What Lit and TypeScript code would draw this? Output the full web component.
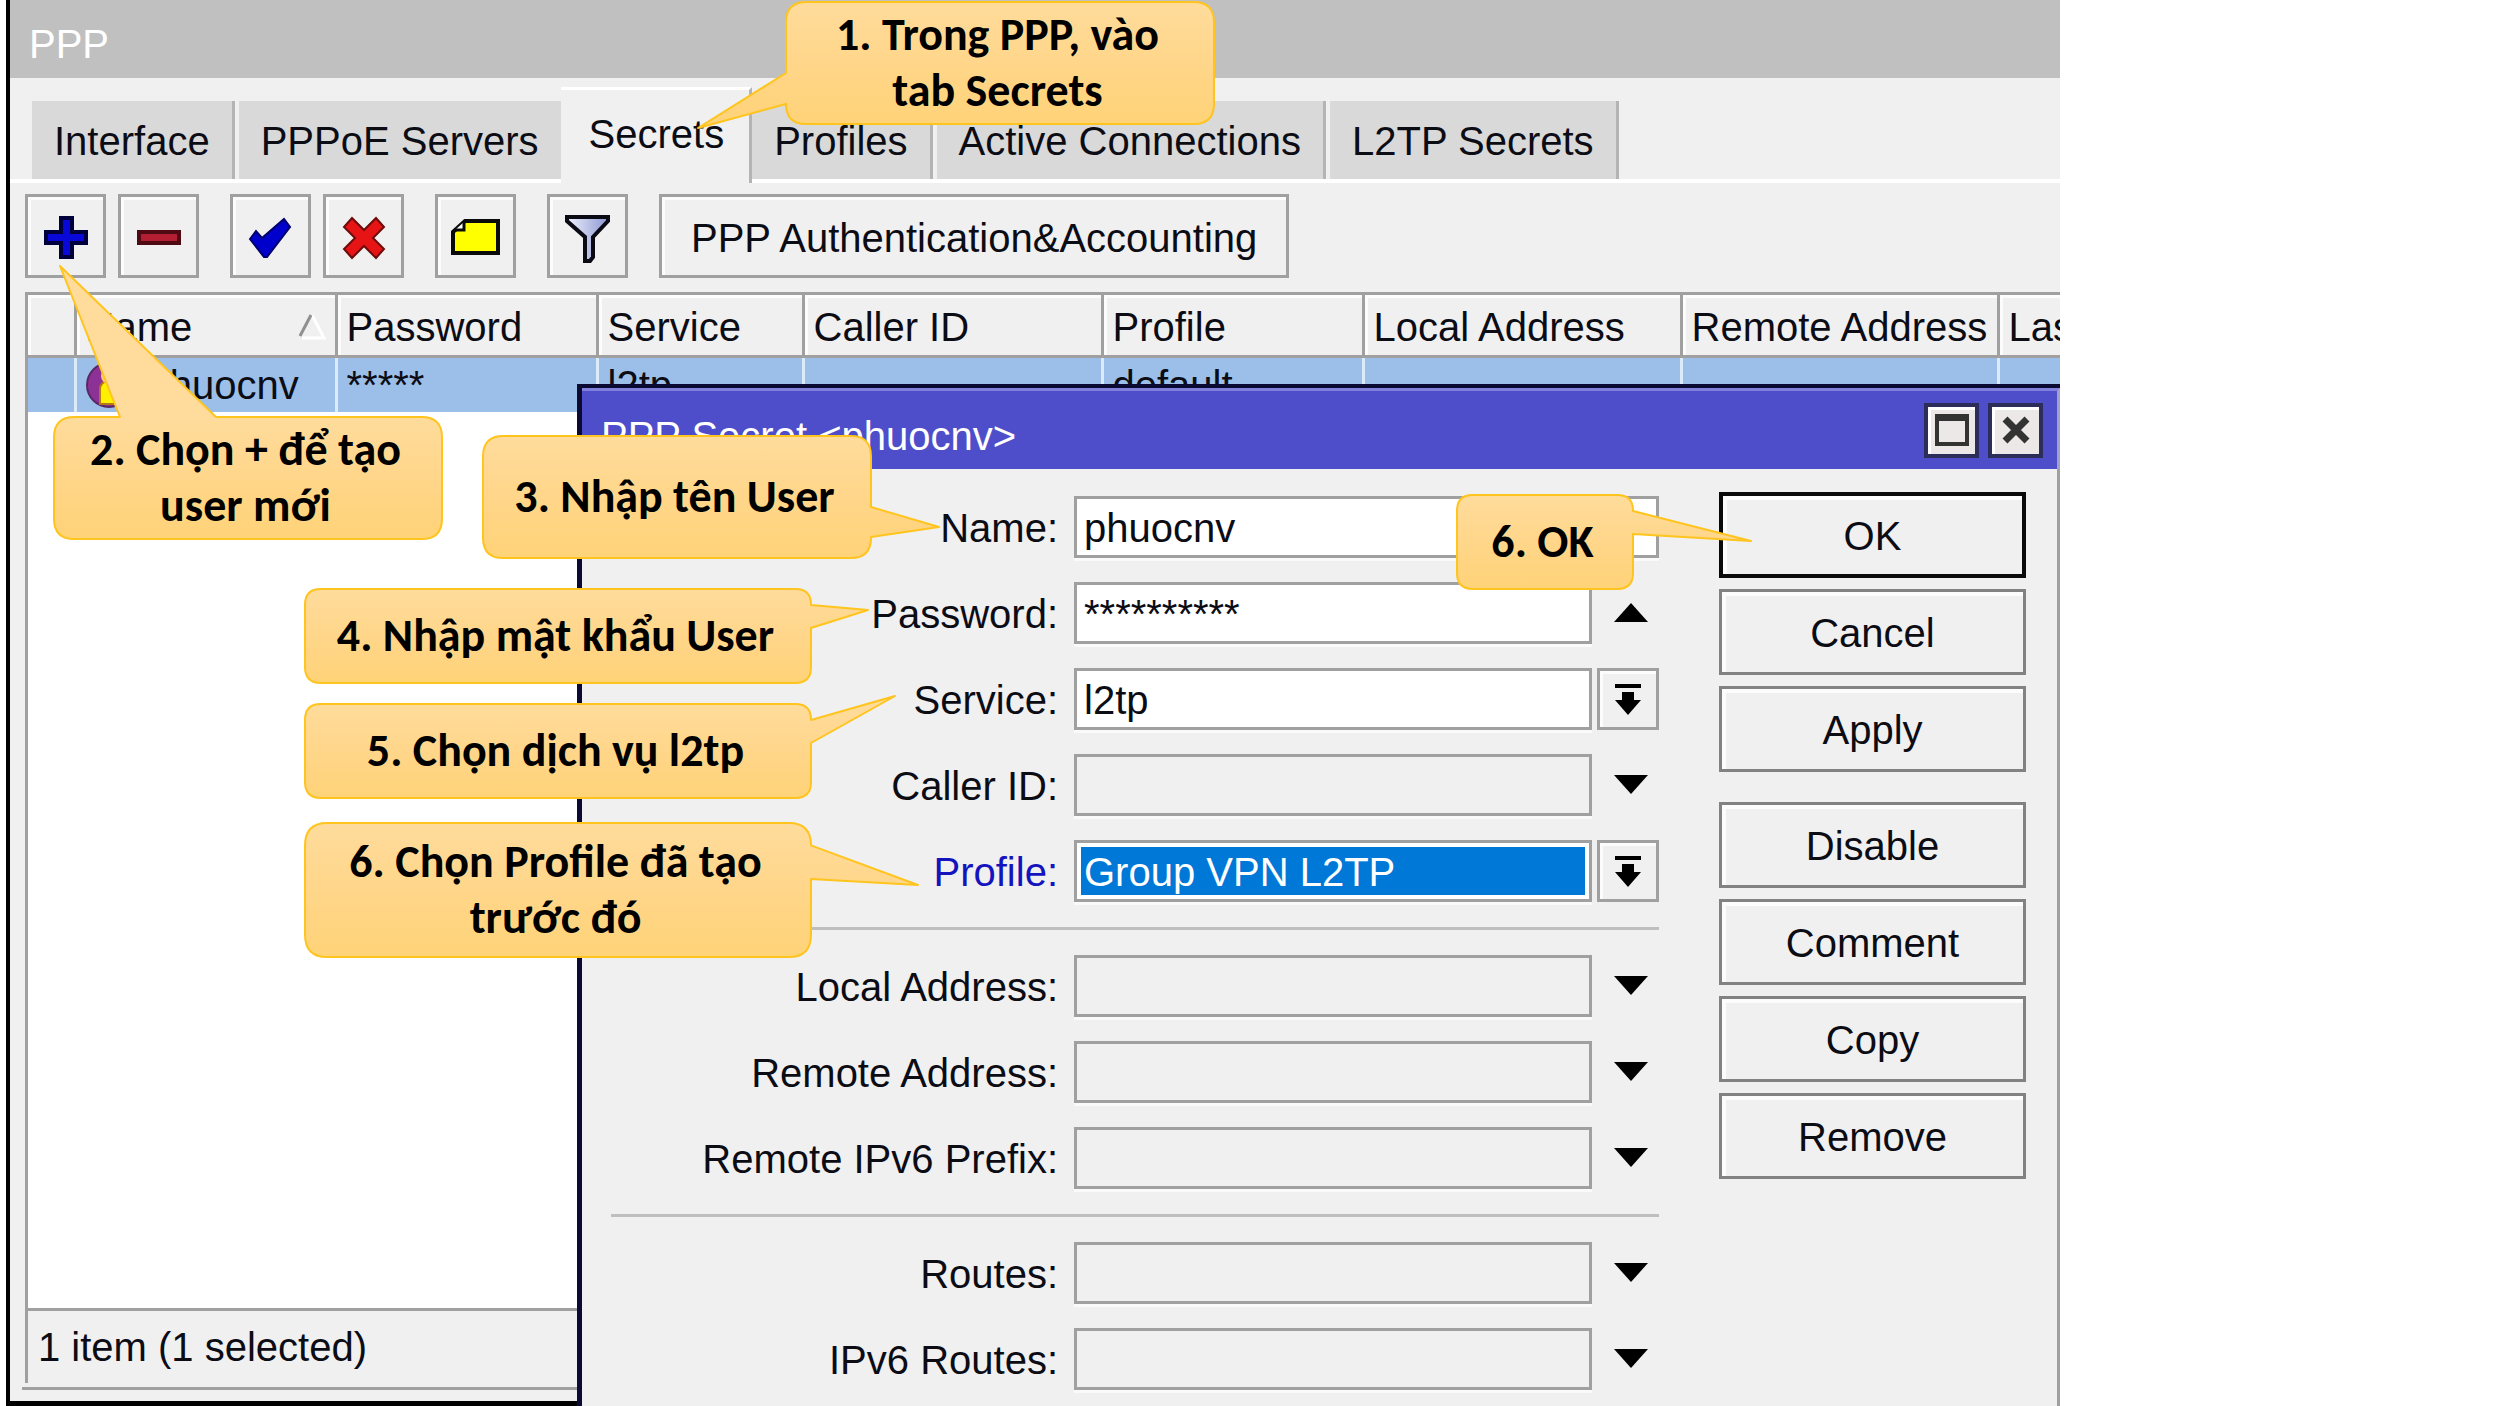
import { LitElement, html, css, svg, nothing } from "lit";
import { customElement, property } from "lit/decorators.js";
import { classMap } from "lit/directives/class-map.js";
import { styleMap } from "lit/directives/style-map.js";

type Side = "left" | "right" | "top";

interface Note {
  lines: string[];
  x: number;
  y: number;
  w: number;
  h: number;
  side: Side;
  from: number;
  to: number;
  tipX: number;
  tipY: number;
}

/* Body and tail of each speech bubble, in page pixels. */
const NOTES: Note[] = [
  { lines: ["1. Trong PPP, vào", "tab Secrets"], x: 786, y: 2, w: 428, h: 122, side: "left", from: 73, to: 104, tipX: 698, tipY: 128 },
  { lines: ["2. Chọn + để tạo", "user mới"], x: 54, y: 417, w: 388, h: 122, side: "top", from: 120, to: 216, tipX: 60, tipY: 266 },
  { lines: ["3. Nhập tên User"], x: 483, y: 436, w: 388, h: 122, side: "right", from: 507, to: 537, tipX: 939, tipY: 527 },
  { lines: ["4. Nhập mật khẩu User"], x: 305, y: 589, w: 506, h: 94, side: "right", from: 605, to: 628, tipX: 868, tipY: 610 },
  { lines: ["5. Chọn dịch vụ l2tp"], x: 305, y: 704, w: 506, h: 94, side: "right", from: 720, to: 743, tipX: 895, tipY: 696 },
  { lines: ["6. Chọn Profile đã tạo", "trước đó"], x: 305, y: 823, w: 506, h: 134, side: "right", from: 845, to: 879, tipX: 918, tipY: 885 },
  { lines: ["6. OK"], x: 1457, y: 495, w: 176, h: 94, side: "right", from: 511, to: 534, tipX: 1751, tipY: 541 },
];

@customElement("callout-note")
export class CalloutNote extends LitElement {
  @property({ attribute: false }) note!: Note;

  static styles = css`
    :host { display: block; }
    .box {
      position: absolute;
      box-sizing: border-box;
      display: flex;
      flex-direction: column;
      align-items: center;
      justify-content: center;
      padding: 0 5px 3px 0;
      color: #000;
      font-family: Carlito, Lato, "Open Sans", sans-serif;
      font-weight: 700;
      font-size: 46px;
      line-height: 56px;
      white-space: nowrap;
    }
    .shape { position: absolute; inset: 0; width: 100%; height: 100%; overflow: visible; }
    .line { position: relative; }
  `;

  private outline(n: Note) {
    const r = Math.min(n.w, n.h) / 6;
    const { w, h } = n;
    const tx = n.tipX - n.x;
    const ty = n.tipY - n.y;
    const off = n.side === "top" ? n.x : n.y;
    const a = n.from - off;
    const b = n.to - off;
    const top = n.side === "top" ? `H${a} L${tx} ${ty} L${b} 0` : "";
    const right = n.side === "right" ? `V${Math.max(a, r)} L${tx} ${ty} L${w} ${b}` : "";
    const left = n.side === "left" ? `V${b} L${tx} ${ty} L0 ${a}` : "";
    return `M${r} 0 ${top} H${w - r} Q${w} 0 ${w} ${r} ${right} V${h - r} Q${w} ${h} ${w - r} ${h} H${r} Q0 ${h} 0 ${h - r} ${left} V${r} Q0 0 ${r} 0 Z`;
  }

  render() {
    const n = this.note;
    return html`
      <div class="box" style=${styleMap({ left: `${n.x}px`, top: `${n.y}px`, width: `${n.w}px`, height: `${n.h}px` })}>
        <svg class="shape" aria-hidden="true">
          <defs>
            <linearGradient id="fill" gradientUnits="userSpaceOnUse" x1="0" y1="0" x2="0" y2=${n.h}>
              <stop offset="0" stop-color="#ffdc9c" />
              <stop offset="0.5" stop-color="#ffd68a" />
              <stop offset="1" stop-color="#ffd378" />
            </linearGradient>
          </defs>
          <path d=${this.outline(n)} fill="url(#fill)" stroke="#ffc41e" stroke-width="2" stroke-linejoin="round" />
        </svg>
        ${n.lines.map((t) => html`<span class="line">${t}</span>`)}
      </div>
    `;
  }
}

const ICONS: Record<string, unknown> = {
  add: svg`<path d="M20 5h11v14h14v11H31v14H20V30H5V19h15z" fill="#0808d8" stroke="#00003c" stroke-width="4"/>`,
  remove: svg`<path d="M5 19h40v11H5z" fill="#b41e32" stroke="#500a14" stroke-width="4"/>`,
  enable: svg`<path d="M4 26l6-8 6 7L38 6l6 8-23 30h-3z" fill="#0000cd" stroke="#00006e" stroke-width="2"/>`,
  disable: svg`<path d="M13 5l12 12L37 5l8 9-11 11 11 11-8 9-12-12-12 12-8-9 11-11L5 14z" fill="#e61414" stroke="#6e0a0a" stroke-width="2"/>`,
  comment: svg`<path d="M14 8h33v32H2V19z" fill="#ffff00" stroke="#0a0a0a" stroke-width="4"/><path d="M13 9v8H4" fill="#fff" stroke="#0a0a0a" stroke-width="3"/>`,
  filter: svg`<defs><linearGradient id="fg"><stop offset="0" stop-color="#eef0fc"/><stop offset="1" stop-color="#8c98d2"/></linearGradient></defs><path d="M4 4h41v4L30 24v20l-3 4h-5V24L4 8z" fill="url(#fg)" stroke="#0a0a14" stroke-width="4"/>`,
};

interface Field {
  id: string;
  label: string;
  value?: string;
  kind: "plain" | "up" | "down" | "pick";
  blue?: boolean;
}

const GROUPS: Field[][] = [
  [
    { id: "name", label: "Name:", value: "phuocnv", kind: "plain" },
    { id: "password", label: "Password:", value: "**********", kind: "up" },
    { id: "service", label: "Service:", value: "l2tp", kind: "pick" },
    { id: "caller", label: "Caller ID:", kind: "down" },
    { id: "profile", label: "Profile:", value: "Group VPN L2TP", kind: "pick", blue: true },
  ],
  [
    { id: "local", label: "Local Address:", kind: "down" },
    { id: "remote", label: "Remote Address:", kind: "down" },
    { id: "prefix", label: "Remote IPv6 Prefix:", kind: "down" },
  ],
  [
    { id: "routes", label: "Routes:", kind: "down" },
    { id: "routes6", label: "IPv6 Routes:", kind: "down" },
  ],
];

@customElement("app-root")
export class AppRoot extends LitElement {
  static styles = css`
    :host {
      display: block;
      min-height: 100vh;
      background: #fff;
      color: #0c0c14;
      font-family: "Liberation Sans", Arial, sans-serif;
      font-size: 40px;
      line-height: 54px;
    }
    * { box-sizing: border-box; }
    button, input, select { font: inherit; color: inherit; margin: 0; border-radius: 0; }
    .desk {
      position: relative;
      display: flex;
      width: 82.4vw;
      min-height: 100vh;
      padding-left: 6px;
      overflow: hidden;
      white-space: nowrap;
    }
    .window {
      flex: 1;
      min-width: 0;
      display: flex;
      flex-direction: column;
      border-left: 4px solid #000;
      border-bottom: 5px solid #000;
      background: #f0f0f0;
    }
    .title {
      margin: 0;
      height: 78px;
      padding: 17px 19px 0;
      background: #c0c0c0;
      color: #fff;
      font-size: inherit;
      font-weight: 400;
    }
    .tabs {
      display: flex;
      align-items: flex-end;
      height: 105px;
      padding-left: 22px;
      border-bottom: 4px solid #fff;
    }
    .tab {
      height: 78px;
      padding: 2px 22px 0;
      border: 0;
      border-right: 3px solid #b4b4b4;
      margin-right: 4px;
      background: #d9d9d9;
    }
    .tab.before { border-right: 0; margin-right: 0; }
    .tab.on {
      height: 96px;
      margin: 0 0 -4px;
      padding: 0 25px 6px 28px;
      background: #f0f0f0;
      border-top: 3px solid #fff;
    }
    .tools { display: flex; gap: 12px; padding: 11px 15px 14px; }
    .tool {
      width: 81px;
      height: 84px;
      padding: 4px 0 0;
      display: grid;
      place-items: center;
      border: 3px solid #a0a0a0;
      background: #f0f0f0;
      box-shadow: inset 3px 3px 0 #fcfcfc;
    }
    .tool svg { width: 50px; height: 50px; }
    .tool.gap { margin-left: 19px; }
    .tool.wide { width: auto; padding: 4px 29px 0; }
    .list {
      flex: 1;
      display: flex;
      flex-direction: column;
      justify-content: space-between;
      margin-left: 15px;
      border-left: 3px solid #a0a0a0;
      border-top: 3px solid #a0a0a0;
      background: #fff;
      overflow: hidden;
    }
    .grid { width: 100%; table-layout: fixed; border-collapse: collapse; }
    .grid th, .grid td { padding: 0 9px; text-align: left; font-weight: 400; overflow: hidden; }
    .grid th {
      height: 61px;
      padding-top: 4px;
      border-right: 3px solid #a0a0a0;
      border-bottom: 3px solid #a0a0a0;
      background: #f0f0f0;
      box-shadow: inset 3px 3px 0 #fcfcfc;
    }
    .grid td { height: 54px; background: #9bbfe8; border-right: 3px solid #dcebfa; }
    .grid tr > :last-child { border-right: 0; }
    .c0 { width: 47px; }
    .c1, .c2 { width: 261px; }
    .c3 { width: 206px; }
    .c4 { width: 299px; }
    .c5 { width: 261px; }
    .c6 { width: 318px; }
    .c7 { width: 317px; }
    .cell { display: flex; align-items: center; justify-content: space-between; }
    .cell.user { justify-content: flex-start; gap: 14px; }
    .cell svg { flex: none; }
    .status { height: 75px; padding: 9px 10px; border-top: 3px solid #a0a0a0; background: #f0f0f0; }
    .foot { height: 14px; margin: 4px 0 0 12px; border-top: 3px solid #a0a0a0; }

    .dialog {
      position: absolute;
      left: 577px;
      top: 384px;
      right: 0;
      bottom: 0;
      display: flex;
      flex-direction: column;
      border: solid #0a0a32;
      border-width: 4px 0 0 5px;
      background: #f0f0f0;
    }
    .bar {
      display: flex;
      align-items: center;
      gap: 9px;
      height: 81px;
      padding: 0 14px 0 19px;
      background: #4e4ecb;
      border-top: 3px solid #8080dc;
      border-right: 3px solid #a0a0c8;
      color: #fff;
    }
    .bar h2 { flex: 1; margin: 0; padding-top: 12px; font-size: inherit; font-weight: 400; }
    .sys {
      width: 55px;
      height: 55px;
      padding: 0;
      display: grid;
      place-items: center;
      border: 4px solid #2d2d5a;
      background: #ece8e8;
      box-shadow: inset 3px 3px 0 #fff;
    }
    .body {
      flex: 1;
      display: flex;
      gap: 60px;
      padding: 23px 31px 0 29px;
      border-right: 3px solid #a0a0a0;
    }
    .form { flex: 1; display: flex; flex-direction: column; gap: 24px; padding-top: 4px; }
    .row { display: flex; align-items: center; height: 62px; gap: 5px; }
    .row label { flex: 1; padding: 2px 11px 0 0; text-align: right; }
    .row label.blue { color: #1414be; }
    .value {
      width: 518px;
      height: 62px;
      padding: 2px 7px 0;
      border: 3px solid #a0a0a0;
      outline: 0;
      background: #fff;
      box-shadow: 0 3px 0 #fafafa;
      appearance: none;
    }
    .value.long { width: 585px; }
    .value.empty { background: #f0f0f0; }
    .value.picked { color: #fff; background: #0078d7; box-shadow: inset 0 0 0 4px #fff, 0 3px 0 #fafafa; }
    .side { width: 62px; height: 62px; padding: 0; display: grid; place-items: center; border: 3px solid transparent; background: none; }
    .side.pick { border-color: #a0a0a0; box-shadow: inset 3px 3px 0 #fcfcfc; }
    .rule { width: 100%; height: 3px; margin: 1px 0; border: 0; background: #bebebe; }
    .actions { display: flex; flex-direction: column; gap: 11px; width: 307px; }
    .action {
      height: 86px;
      padding: 2px 0 0;
      border: 3px solid #828282;
      background: #f0f0f0;
      box-shadow: inset 4px 4px 0 #fcfcfc;
    }
    .action.main { border: 4px solid #0a0a0a; }
    .action.apart { margin-top: 19px; }
  `;

  private tool(name: string, label: string, gap = false) {
    return html`<button class=${classMap({ tool: true, gap })} aria-label=${label}>
      <svg viewBox="0 0 50 50" aria-hidden="true">${ICONS[name]}</svg>
    </button>`;
  }

  private side(f: Field) {
    if (f.kind === "plain") return nothing;
    const icon =
      f.kind === "pick"
        ? svg`<path d="M5 3h26v4H5zM12 11h12v8h7L18 34 5 19h7z"/>`
        : f.kind === "up"
          ? svg`<path d="M4 27h34L21 8z"/>`
          : svg`<path d="M4 8h34L21 27z"/>`;
    return html`<button class=${classMap({ side: true, pick: f.kind === "pick" })} aria-label=${`${f.label} options`}>
      <svg width="36" height="36" viewBox="0 0 36 36" overflow="visible" aria-hidden="true">${icon}</svg>
    </button>`;
  }

  private field(f: Field) {
    const cls = classMap({ value: true, long: f.kind === "plain", empty: !f.value, picked: !!f.blue });
    return html`<div class="row">
      <label class=${classMap({ blue: !!f.blue })} for=${f.id}>${f.label}</label>
      ${f.kind === "pick"
        ? html`<select class=${cls} id=${f.id}><option selected>${f.value}</option></select>`
        : html`<input class=${cls} id=${f.id} type="text" .value=${f.value ?? ""} />`}
      ${this.side(f)}
    </div>`;
  }

  render() {
    const tabs = ["Interface", "PPPoE Servers", "Secrets", "Profiles", "Active Connections", "L2TP Secrets"];
    const heads = ["", "Name", "Password", "Service", "Caller ID", "Profile", "Local Address", "Remote Address", "Las"];
    const cells = ["*****", "l2tp", "", "default", "", "", ""];
    const actions = ["OK", "Cancel", "Apply", "Disable", "Comment", "Copy", "Remove"];
    return html`
      <main class="desk">
        <section class="window">
          <h1 class="title">PPP</h1>
          <div class="tabs" role="tablist">
            ${tabs.map((t) => html`<button role="tab" aria-selected=${t === "Secrets"} class=${classMap({ tab: true, on: t === "Secrets", before: t === "PPPoE Servers" })}>${t}</button>`)}
          </div>
          <div class="tools">
            ${this.tool("add", "Add")} ${this.tool("remove", "Remove")} ${this.tool("enable", "Enable", true)}
            ${this.tool("disable", "Disable")} ${this.tool("comment", "Comment", true)} ${this.tool("filter", "Filter", true)}
            <button class="tool wide gap">PPP Authentication&amp;Accounting</button>
          </div>
          <div class="list">
            <table class="grid">
              <colgroup>
                ${heads.map((_, i) => html`<col class=${`c${i}`} />`)}
              </colgroup>
              <thead>
                <tr>
                  ${heads.map((h) => html`<th>${h === "Name"
                    ? html`<div class="cell">${h}<svg width="28" height="26" viewBox="0 0 28 26" aria-hidden="true"><path d="M14 1l12 23H4" fill="none" stroke="#fff" stroke-width="3"/><path d="M2 22L13 1" stroke="#909090" stroke-width="3"/></svg></div>`
                    : h}</th>`)}
                </tr>
              </thead>
              <tbody>
                <tr>
                  <td></td>
                  <td>
                    <div class="cell user">
                      <svg width="48" height="46" viewBox="0 0 48 46" aria-hidden="true">
                        <circle cx="23" cy="23" r="22" fill="#8c3296" stroke="#5a2864" stroke-width="2"/>
                        <path d="M14 42V28q0-9 9-9t9 9v14z" fill="#fff000" stroke="#b47814" stroke-width="2"/>
                        <circle cx="23" cy="14" r="8" fill="#ffc878"/>
                      </svg>
                      phuocnv
                    </div>
                  </td>
                  ${cells.map((c) => html`<td>${c}</td>`)}
                </tr>
              </tbody>
            </table>
            <div class="status">1 item (1 selected)</div>
          </div>
          <div class="foot"></div>
        </section>

        <section class="dialog" role="dialog" aria-labelledby="dlg">
          <div class="bar">
            <h2 id="dlg">PPP Secret &lt;phuocnv&gt;</h2>
            <button class="sys" aria-label="Maximize">
              <svg width="34" height="34" viewBox="0 0 34 34" aria-hidden="true"><path d="M2 4h30v27H2z" fill="none" stroke="#333" stroke-width="4"/><path d="M0 1h34v7H0z" fill="#333"/></svg>
            </button>
            <button class="sys" aria-label="Close">
              <svg width="28" height="28" viewBox="0 0 28 28" aria-hidden="true"><path d="M3 3l22 22M25 3L3 25" stroke="#333" stroke-width="7"/></svg>
            </button>
          </div>
          <div class="body">
            <div class="form">
              ${GROUPS.map((g, i) => html`${i ? html`<hr class="rule" />` : nothing}${g.map((f) => this.field(f))}`)}
            </div>
            <div class="actions">
              ${actions.map((a) => html`<button class=${classMap({ action: true, main: a === "OK", apart: a === "Disable" })}>${a}</button>`)}
            </div>
          </div>
        </section>

        ${NOTES.map((n) => html`<callout-note .note=${n}></callout-note>`)}
      </main>
    `;
  }
}
